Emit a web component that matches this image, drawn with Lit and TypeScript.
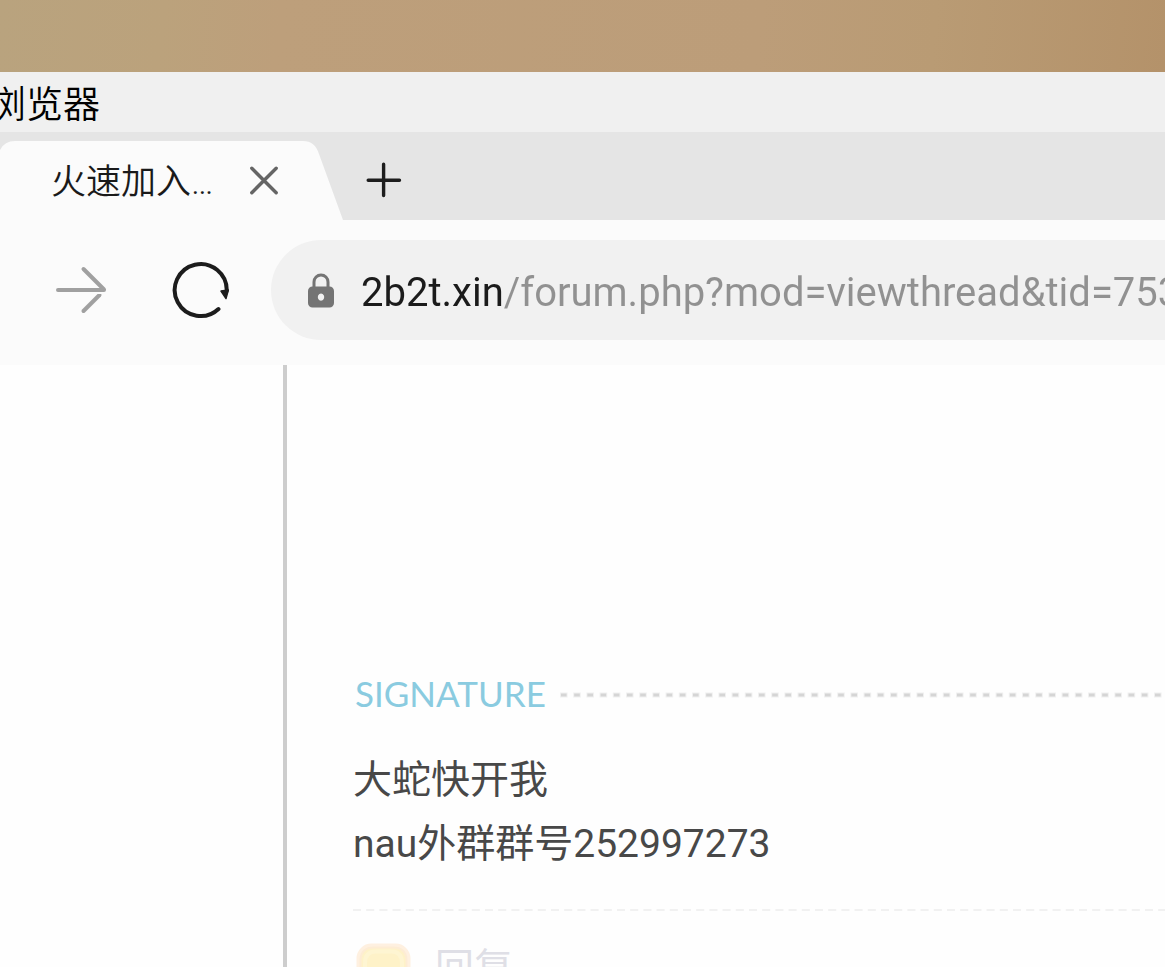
import { LitElement, html, css } from "lit";
import { customElement, property } from "lit/decorators.js";

const fontStack = css`Roboto, "Noto Sans CJK SC", sans-serif`;

@customElement("browser-tabs")
class BrowserTabs extends LitElement {
  @property() label = "";

  static styles = css`
    :host {
      display: flex;
      align-items: flex-end;
      height: 88px;
      background: #e5e5e5;
      font-family: ${fontStack};
    }
    .tab {
      display: flex;
      align-items: center;
      box-sizing: border-box;
      width: 343px;
      height: 79px;
      padding-left: 51px;
      background: #fbfbfb;
      clip-path: path("M-2 14 Q2 0 15 0 H303 Q315 0 319 13 L343 79 H-2 Z");
    }
    .label {
      width: 163px;
      padding-top: 4px;
      font-size: 35px;
      font-weight: 350;
      line-height: 48px;
      color: #1a1a1a;
      white-space: nowrap;
    }
    button {
      display: block;
      margin: 0;
      padding: 0;
      border: 0;
      background: none;
    }
    svg {
      display: block;
    }
    .close {
      margin-left: 34px;
    }
    .add {
      margin: 0 0 20px 21px;
    }
  `;

  render() {
    return html`
      <div class="tab">
        <span class="label">${this.label}</span>
        <button class="close" aria-label="关闭标签页">
          <svg width="32" height="32" viewBox="0 0 32 32" fill="none" stroke="#656565" stroke-width="3.4" stroke-linecap="round">
            <path d="M3.8 3.300 28.200 27.700M28.200 3.300 3.800 27.700" />
          </svg>
        </button>
      </div>
      <button class="add" aria-label="新建标签页">
        <svg width="40" height="40" viewBox="0 0 40 40" fill="none" stroke="#1d1d1d" stroke-width="3.4" stroke-linecap="round">
          <path d="M4.2 20.200H35.500M19.600 4.200V35.500" />
        </svg>
      </button>
    `;
  }
}

@customElement("browser-toolbar")
class BrowserToolbar extends LitElement {
  @property() url = "";

  static styles = css`
    :host {
      display: flex;
      align-items: center;
      height: 145px;
      padding-bottom: 5px;
      box-sizing: border-box;
      background: #fbfbfb;
      font-family: ${fontStack};
    }
    button {
      display: block;
      flex: none;
      margin: 0;
      padding: 0;
      border: 0;
      background: none;
    }
    svg {
      display: block;
      flex: none;
    }
    .forward {
      margin-left: 52px;
    }
    .reload {
      margin: 0 40px 0 59px;
    }
    .address {
      display: flex;
      flex: 1;
      align-items: center;
      min-width: 0;
      box-sizing: border-box;
      height: 100px;
      padding-left: 36px;
      border-radius: 50px 0 0 50px;
      background: #f1f1f1;
    }
    input {
      flex: 1;
      min-width: 0;
      height: 52px;
      margin: 6px 0 0 26px;
      padding: 0;
      border: 0;
      outline: 0;
      font: 40px/52px ${fontStack};
      color: #919191;
      -webkit-text-fill-color: transparent;
      background: linear-gradient(90deg, #1b1b1b 142px, #919191 142px);
      -webkit-background-clip: text;
      background-clip: text;
    }
  `;

  render() {
    return html`
      <button class="forward" aria-label="前进">
        <svg width="60" height="60" viewBox="0 0 60 60" fill="none" stroke="#a0a0a0" stroke-width="4" stroke-linecap="round">
          <path d="M6 30H52M31.5 9 52 29.5" />
          <path d="M31.5 51 47.5 35" />
          <path d="M45.5 33H53" stroke="#fbfbfb" stroke-width="2" />
        </svg>
      </button>
      <button class="reload" aria-label="重新加载">
        <svg width="60" height="60" viewBox="0 0 60 60" fill="none" stroke="#1c1c1c" stroke-width="4" stroke-linecap="round">
          <path d="M47.5 49A26 26 0 1 1 55.7 31" />
          <path d="M50 31 57.3 30 55 38.5Z" fill="#1c1c1c" stroke-width="1.5" stroke-linejoin="round" />
        </svg>
      </button>
      <label class="address">
        <svg width="28" height="36" viewBox="0 0 28 36" role="img" aria-label="安全连接">
          <path d="M7 16V10a7 7 0 0 1 14 0V16" fill="none" stroke="#747474" stroke-width="3" />
          <path
            fill="#747474"
            fill-rule="evenodd"
            d="M5.5 14.500h17a4.500 4.500 0 0 1 4.500 4.500v12a4.500 4.500 0 0 1-4.500 4.500h-17a4.500 4.500 0 0 1-4.500-4.500v-12a4.500 4.500 0 0 1 4.500-4.500zM14 21.500a3.200 3.600 0 1 0 .01 0z"
          />
        </svg>
        <input type="text" aria-label="网址" spellcheck="false" .value=${this.url} />
      </label>
    `;
  }
}

@customElement("forum-post")
class ForumPost extends LitElement {
  @property({ attribute: false }) signature: string[] = [];

  static styles = css`
    :host {
      display: grid;
      grid-template-columns: 283px minmax(0, 1fr);
      background: #fefefe;
      font-family: ${fontStack};
    }
    .post {
      grid-column: 2;
      padding: 308px 0 0 66px;
      border-left: 4px solid #cdcdcd;
    }
    .heading {
      display: flex;
      align-items: center;
      gap: 14px;
      height: 40px;
      padding-left: 2px;
    }
    h2 {
      margin: 0;
      font: 400 35px/40px Lato, sans-serif;
      color: #8acbe0;
    }
    svg {
      display: block;
    }
    .dots {
      flex: 1;
      min-width: 0;
      height: 6px;
      padding-top: 3px;
    }
    .signature {
      margin: 35px 0 33px;
      font-size: 39px;
      line-height: 64px;
      color: #484848;
    }
    .signature p {
      margin: 0;
    }
    .rule {
      width: 100%;
      height: 2px;
    }
    .reply {
      display: flex;
      align-items: flex-start;
      gap: 24px;
      margin-top: 32px;
      padding-left: 3px;
      color: #dfdfe6;
      font-size: 39px;
      line-height: 50px;
      text-decoration: none;
    }
  `;

  render() {
    return html`
      <article class="post">
        <div class="heading">
          <h2>SIGNATURE</h2>
          <svg class="dots" aria-hidden="true">
            <line x1="0" y1="3" x2="100%" y2="3" stroke="#f0f0f0" stroke-width="5" stroke-dasharray="7.600 5.600" />
            <line x1="1" y1="3" x2="100%" y2="3" stroke="#d5d5d5" stroke-width="3" stroke-dasharray="5.600 7.600" />
          </svg>
        </div>
        <div class="signature">${this.signature.map((line) => html`<p>${line}</p>`)}</div>
        <svg class="rule" aria-hidden="true">
          <line x1="0" y1="1" x2="100%" y2="1" stroke="#f1f1f1" stroke-width="2" stroke-dasharray="8 5.200" />
        </svg>
        <a class="reply" href="#reply">
          <svg width="55" height="50" viewBox="0 0 55 50" aria-hidden="true">
            <rect x="2.500" y="2.500" width="50" height="60" rx="13" fill="#fef2c8" stroke="#fef0e0" stroke-width="4" />
            <path d="M4.500 26V17Q5 4.500 18 4.500H37Q50 4.500 50.500 17V26" fill="none" stroke="#fdecd4" stroke-width="2" />
            <path d="M9 26V20Q9 8.500 20 8.500H35Q46 8.500 46 20V26" fill="none" stroke="#fef5d2" stroke-width="4" />
          </svg>
          <span>回复</span>
        </a>
      </article>
    `;
  }
}

@customElement("app-root")
class AppRoot extends LitElement {
  static styles = css`
    :host {
      display: flex;
      flex-direction: column;
      height: 100vh;
      overflow: hidden;
      background: #fefefe;
      font-family: ${fontStack};
    }
    .desktop {
      flex: none;
      height: 72px;
      background: linear-gradient(95deg, #b9a37e 0%, #bba27c 14%, #bd9f7b 24%, #bc9d79 65%, #b99b74 80%, #b4926a 100%);
    }
    .title {
      flex: none;
      box-sizing: border-box;
      height: 60px;
      padding-top: 4px;
      overflow: hidden;
      background: #f0f0f0;
      color: #000;
      font-size: 37px;
      font-weight: 350;
      line-height: 60px;
      white-space: nowrap;
    }
    .title span {
      display: block;
      margin-left: -11px;
    }
    browser-tabs,
    browser-toolbar {
      flex: none;
    }
    forum-post {
      flex: 1 0 auto;
    }
  `;

  render() {
    return html`
      <div class="desktop"></div>
      <header class="title"><span>浏览器</span></header>
      <browser-tabs label="火速加入…"></browser-tabs>
      <browser-toolbar url="2b2t.xin/forum.php?mod=viewthread&tid=753"></browser-toolbar>
      <forum-post .signature=${["大蛇快开我", "nau外群群号252997273"]}></forum-post>
    `;
  }
}
